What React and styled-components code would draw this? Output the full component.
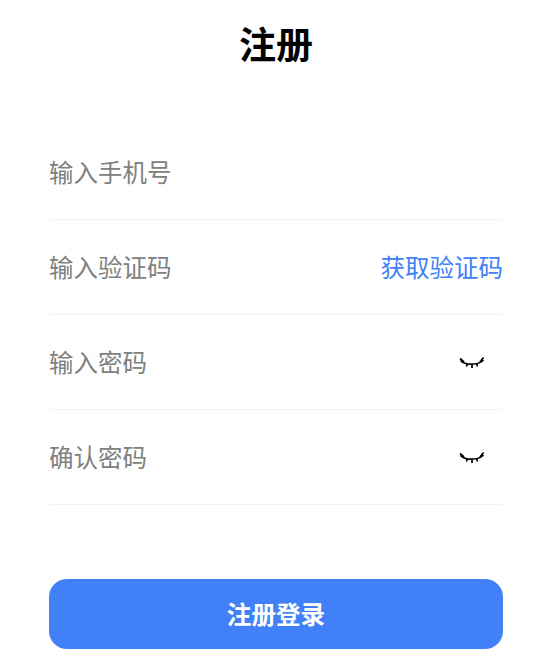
import React from 'react';
import styled, { createGlobalStyle } from 'styled-components';

const GlobalStyle = createGlobalStyle`
    html, body {
        margin: 0;
        padding: 0;
        background-color: #FFFFFF;
        font-family: 'Noto Sans CJK SC', 'Noto Sans', sans-serif;
    }
`

function EyeClosed() {
    return (
        <svg width="26" height="14" viewBox="0 0 26 14" fill="none" stroke="#000000">
            <path d="M1.5 4.5 C6 9.5, 19 9.5, 24.5 4" strokeWidth="1.7" />
            <path d="M1 2.5 L5 6 M8.5 7.5 L7.5 10.5 M13 8.5 L13 12 M17.5 7.5 L18.5 10.5 M21 6 L24.5 1.5" strokeWidth="1.7" />
        </svg>
    )
}

export default function App() {
    return (
        <RegisterScreen>
            <GlobalStyle />
            <Title>注册</Title>
            <Form>
                <Row>
                    <Placeholder>输入手机号</Placeholder>
                </Row>
                <Row>
                    <Placeholder>输入验证码</Placeholder>
                    <CodeLink>获取验证码</CodeLink>
                </Row>
                <Row>
                    <Placeholder>输入密码</Placeholder>
                    <EyeSlot><EyeClosed /></EyeSlot>
                </Row>
                <Row>
                    <Placeholder>确认密码</Placeholder>
                    <EyeSlot><EyeClosed /></EyeSlot>
                </Row>
            </Form>
            <Submit>注册登录</Submit>
        </RegisterScreen>
    )
}

const RegisterScreen = styled.div`
    width: 552px;
    height: 671px;
    box-sizing: border-box;
    padding: 0 49px;
    display: flex;
    flex-direction: column;
    overflow: hidden;
    background-color: #FFFFFF;
`
const Title = styled.div`
    height: 86px;
    line-height: 86px;
    text-align: center;
    font-size: 37px;
    font-weight: 700;
    color: #000000;
`
const Form = styled.div`
    margin-top: 39px;
    display: flex;
    flex-direction: column;
`
const Row = styled.div`
    padding-bottom: 1px;
    box-sizing: border-box;
    height: 95px;
    border-bottom: 1px solid #F3F3F3;
    display: flex;
    align-items: center;
    justify-content: space-between;
`
const Placeholder = styled.div`
    font-size: 24.5px;
    color: #808080;
`
const CodeLink = styled.div`
    font-size: 24.5px;
    color: #4180F7;
`
const EyeSlot = styled.div`
    display: flex;
    margin-top: 3px;
    margin-right: 18px;
`
const Submit = styled.button`
    margin-top: 74px;
    height: 70px;
    padding: 0 0 2px;
    border: none;
    border-radius: 18px;
    background-color: #4280F8;
    color: #FFFFFF;
    font-family: inherit;
    font-size: 24.6px;
    font-weight: 700;
`
